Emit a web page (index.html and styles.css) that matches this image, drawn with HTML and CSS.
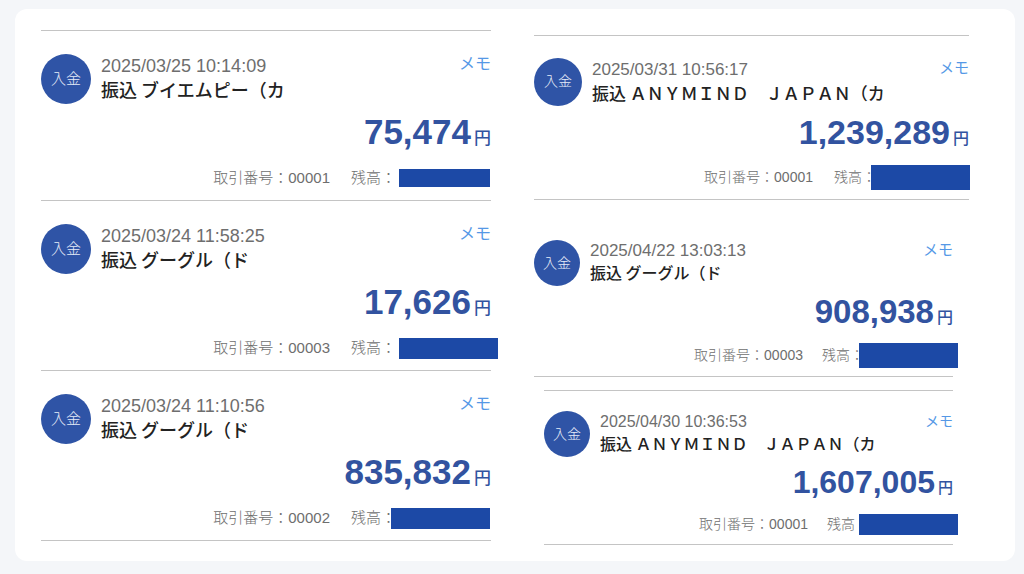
FILE: index.html
```html
<!DOCTYPE html>
<html lang="ja">
<head>
  <meta charset="UTF-8" />
  <meta name="viewport" content="width=device-width, initial-scale=1.0" />
  <title>入出金明細</title>
  <link rel="stylesheet" href="styles.css">
</head>
<body>
  <main class="panel">
    <section class="column column-ruled">
      <article class="entry">
        <div class="entry-head">
          <span class="badge">入金</span>
          <div class="entry-title">
            <time class="date">2025/03/25 10:14:09</time>
            <h2 class="name">振込 ブイエムピー（カ</h2>
          </div>
          <a class="memo" href="#">メモ</a>
        </div>
        <p class="amount">75,474<span class="yen">円</span></p>
        <div class="meta">
          <span>取引番号：00001</span>
          <span class="balance">残高：<span class="mask mask-small"></span></span>
        </div>
      </article>

      <article class="entry">
        <div class="entry-head">
          <span class="badge">入金</span>
          <div class="entry-title">
            <time class="date">2025/03/24 11:58:25</time>
            <h2 class="name">振込 グーグル（ド</h2>
          </div>
          <a class="memo" href="#">メモ</a>
        </div>
        <p class="amount">17,626<span class="yen">円</span></p>
        <div class="meta">
          <span>取引番号：00003</span>
          <span class="balance">残高：<span class="mask"></span></span>
        </div>
      </article>

      <article class="entry">
        <div class="entry-head">
          <span class="badge">入金</span>
          <div class="entry-title">
            <time class="date">2025/03/24 11:10:56</time>
            <h2 class="name">振込 グーグル（ド</h2>
          </div>
          <a class="memo" href="#">メモ</a>
        </div>
        <p class="amount">835,832<span class="yen">円</span></p>
        <div class="meta">
          <span>取引番号：00002</span>
          <span class="balance">残高：<span class="mask mask-over"></span></span>
        </div>
      </article>
    </section>

    <section class="column">
      <article class="entry entry-large">
        <div class="entry-head">
          <span class="badge">入金</span>
          <div class="entry-title">
            <time class="date">2025/03/31 10:56:17</time>
            <h2 class="name">振込 ＡＮＹＭＩＮＤ　ＪＡＰＡＮ（カ</h2>
          </div>
          <a class="memo" href="#">メモ</a>
        </div>
        <p class="amount">1,239,289<span class="yen">円</span></p>
        <div class="meta">
          <span>取引番号：00001</span>
          <span class="balance">残高：<span class="mask mask-over mask-tall"></span></span>
        </div>
      </article>

      <article class="entry entry-medium">
        <div class="entry-head">
          <span class="badge">入金</span>
          <div class="entry-title">
            <time class="date">2025/04/22 13:03:13</time>
            <h2 class="name">振込 グーグル（ド</h2>
          </div>
          <a class="memo" href="#">メモ</a>
        </div>
        <p class="amount">908,938<span class="yen">円</span></p>
        <div class="meta">
          <span>取引番号：00003</span>
          <span class="balance">残高：<span class="mask mask-over mask-tall"></span></span>
        </div>
      </article>

      <article class="entry entry-small">
        <div class="entry-head">
          <span class="badge">入金</span>
          <div class="entry-title">
            <time class="date">2025/04/30 10:36:53</time>
            <h2 class="name">振込 ＡＮＹＭＩＮＤ　ＪＡＰＡＮ（カ</h2>
          </div>
          <a class="memo" href="#">メモ</a>
        </div>
        <p class="amount">1,607,005<span class="yen">円</span></p>
        <div class="meta">
          <span>取引番号：00001</span>
          <span class="balance">残高：<span class="mask mask-cover"></span></span>
        </div>
      </article>
    </section>
  </main>
</body>
</html>
```
FILE: styles.css
```css
* {
  box-sizing: border-box;
}
body {
  margin: 0;
  padding: 9px 9px 13px 15px;
  background: #f4f6f9;
  color: #6e6e6e;
  font-family: "Liberation Sans", "Noto Sans CJK JP", sans-serif;
}
.panel {
  display: grid;
  grid-template-columns: 450fr 435fr;
  column-gap: 43px;
  padding: 21px 46px 16px 26px;
  background: #fff;
  border-radius: 12px;
}
.column-ruled {
  border-top: 1px solid #c4c4c4;
}

/* one deposit; the size classes below only change these values */
.entry {
  --badge: 50px;
  --date: 18px;
  --name: 18px;
  --amount: 35px;
  --amount-line: 40px;
  --yen: 17px;
  --memo: 16px;
  --meta: 15px;
  --balance: 140px;
  padding: 23px 0 12px;
  border-bottom: 1px solid #c4c4c4;
}
.entry-head {
  display: flex;
  align-items: flex-start;
  height: var(--badge);
}
.badge {
  flex: none;
  width: var(--badge);
  height: var(--badge);
  border-radius: 50%;
  background: #2f54a6;
  color: #e6ecf8;
  font-family: "Noto Sans CJK JP", sans-serif;
  font-size: var(--meta);
  font-weight: 300;
  line-height: 48px;
  text-align: center;
}
.entry-title {
  flex: 1;
  margin-left: 10px;
  white-space: nowrap;
}
.date {
  display: block;
  font-size: var(--date);
  line-height: 24px;
}
.name {
  margin: 0;
  color: #222;
  font-family: "Noto Sans CJK JP", sans-serif;
  font-size: var(--name);
  font-weight: 500;
  line-height: 22px;
}
.memo {
  color: #5598e6;
  font-size: var(--memo);
  line-height: 20px;
  text-decoration: none;
}
.amount {
  margin: 8px 0 0;
  color: #3253a0;
  font-size: var(--amount);
  font-weight: bold;
  line-height: var(--amount-line);
  text-align: right;
}
.yen {
  margin-left: 3px;
  font-size: var(--yen);
  font-weight: 500;
  line-height: 1;
}
.meta {
  display: flex;
  justify-content: flex-end;
  gap: 21px;
  margin-top: 16px;
  font-size: var(--meta);
  font-weight: 300;
  line-height: 20px;
  white-space: nowrap;
}
.balance {
  display: flex;
  align-items: center;
  width: var(--balance);
  height: 20px;
}

/* bar that hides the balance */
.mask {
  flex: none;
  width: 99px;
  height: 21px;
  margin-left: 3px;
  background: #1c49a6;
}
.mask-small {
  width: 91px;
  height: 18px;
}
.mask-over {
  margin-left: -5px;
}
.mask-cover {
  margin-left: -10px;
}
.mask-tall {
  height: 25px;
}

.entry-large {
  --badge: 48px;
  --date: 17px;
  --name: 17px;
  --amount: 34px;
  --amount-line: 38px;
  --yen: 16px;
  --memo: 15px;
  --meta: 14px;
  --balance: 135px;
  margin-top: 5px;
  padding-top: 22px;
  border-top: 1px solid #c4c4c4;
}
.entry-medium {
  --badge: 46px;
  --date: 17px;
  --name: 16px;
  --amount: 33px;
  --amount-line: 38px;
  --yen: 16px;
  --memo: 15px;
  --meta: 14px;
  --balance: 131px;
  margin-right: 16px;
  padding: 40px 0 11px;
}
.entry-small {
  --badge: 46px;
  --date: 16px;
  --name: 16px;
  --amount: 32px;
  --amount-line: 36px;
  --yen: 15px;
  --memo: 14px;
  --meta: 14px;
  --balance: 126px;
  margin: 13px 16px 0 10px;
  padding: 20px 0 10px;
  border-top: 1px solid #c4c4c4;
}
.entry-large .badge,
.entry-medium .badge,
.entry-small .badge {
  line-height: 45px;
}
.entry-medium .date,
.entry-small .date {
  line-height: 22px;
}
.entry-medium .name,
.entry-small .name {
  line-height: 20px;
}
.entry-large .amount,
.entry-medium .amount,
.entry-small .amount {
  margin-top: 7px;
}
.entry-medium .meta,
.entry-small .meta {
  gap: 19px;
  margin-top: 14px;
}
```
